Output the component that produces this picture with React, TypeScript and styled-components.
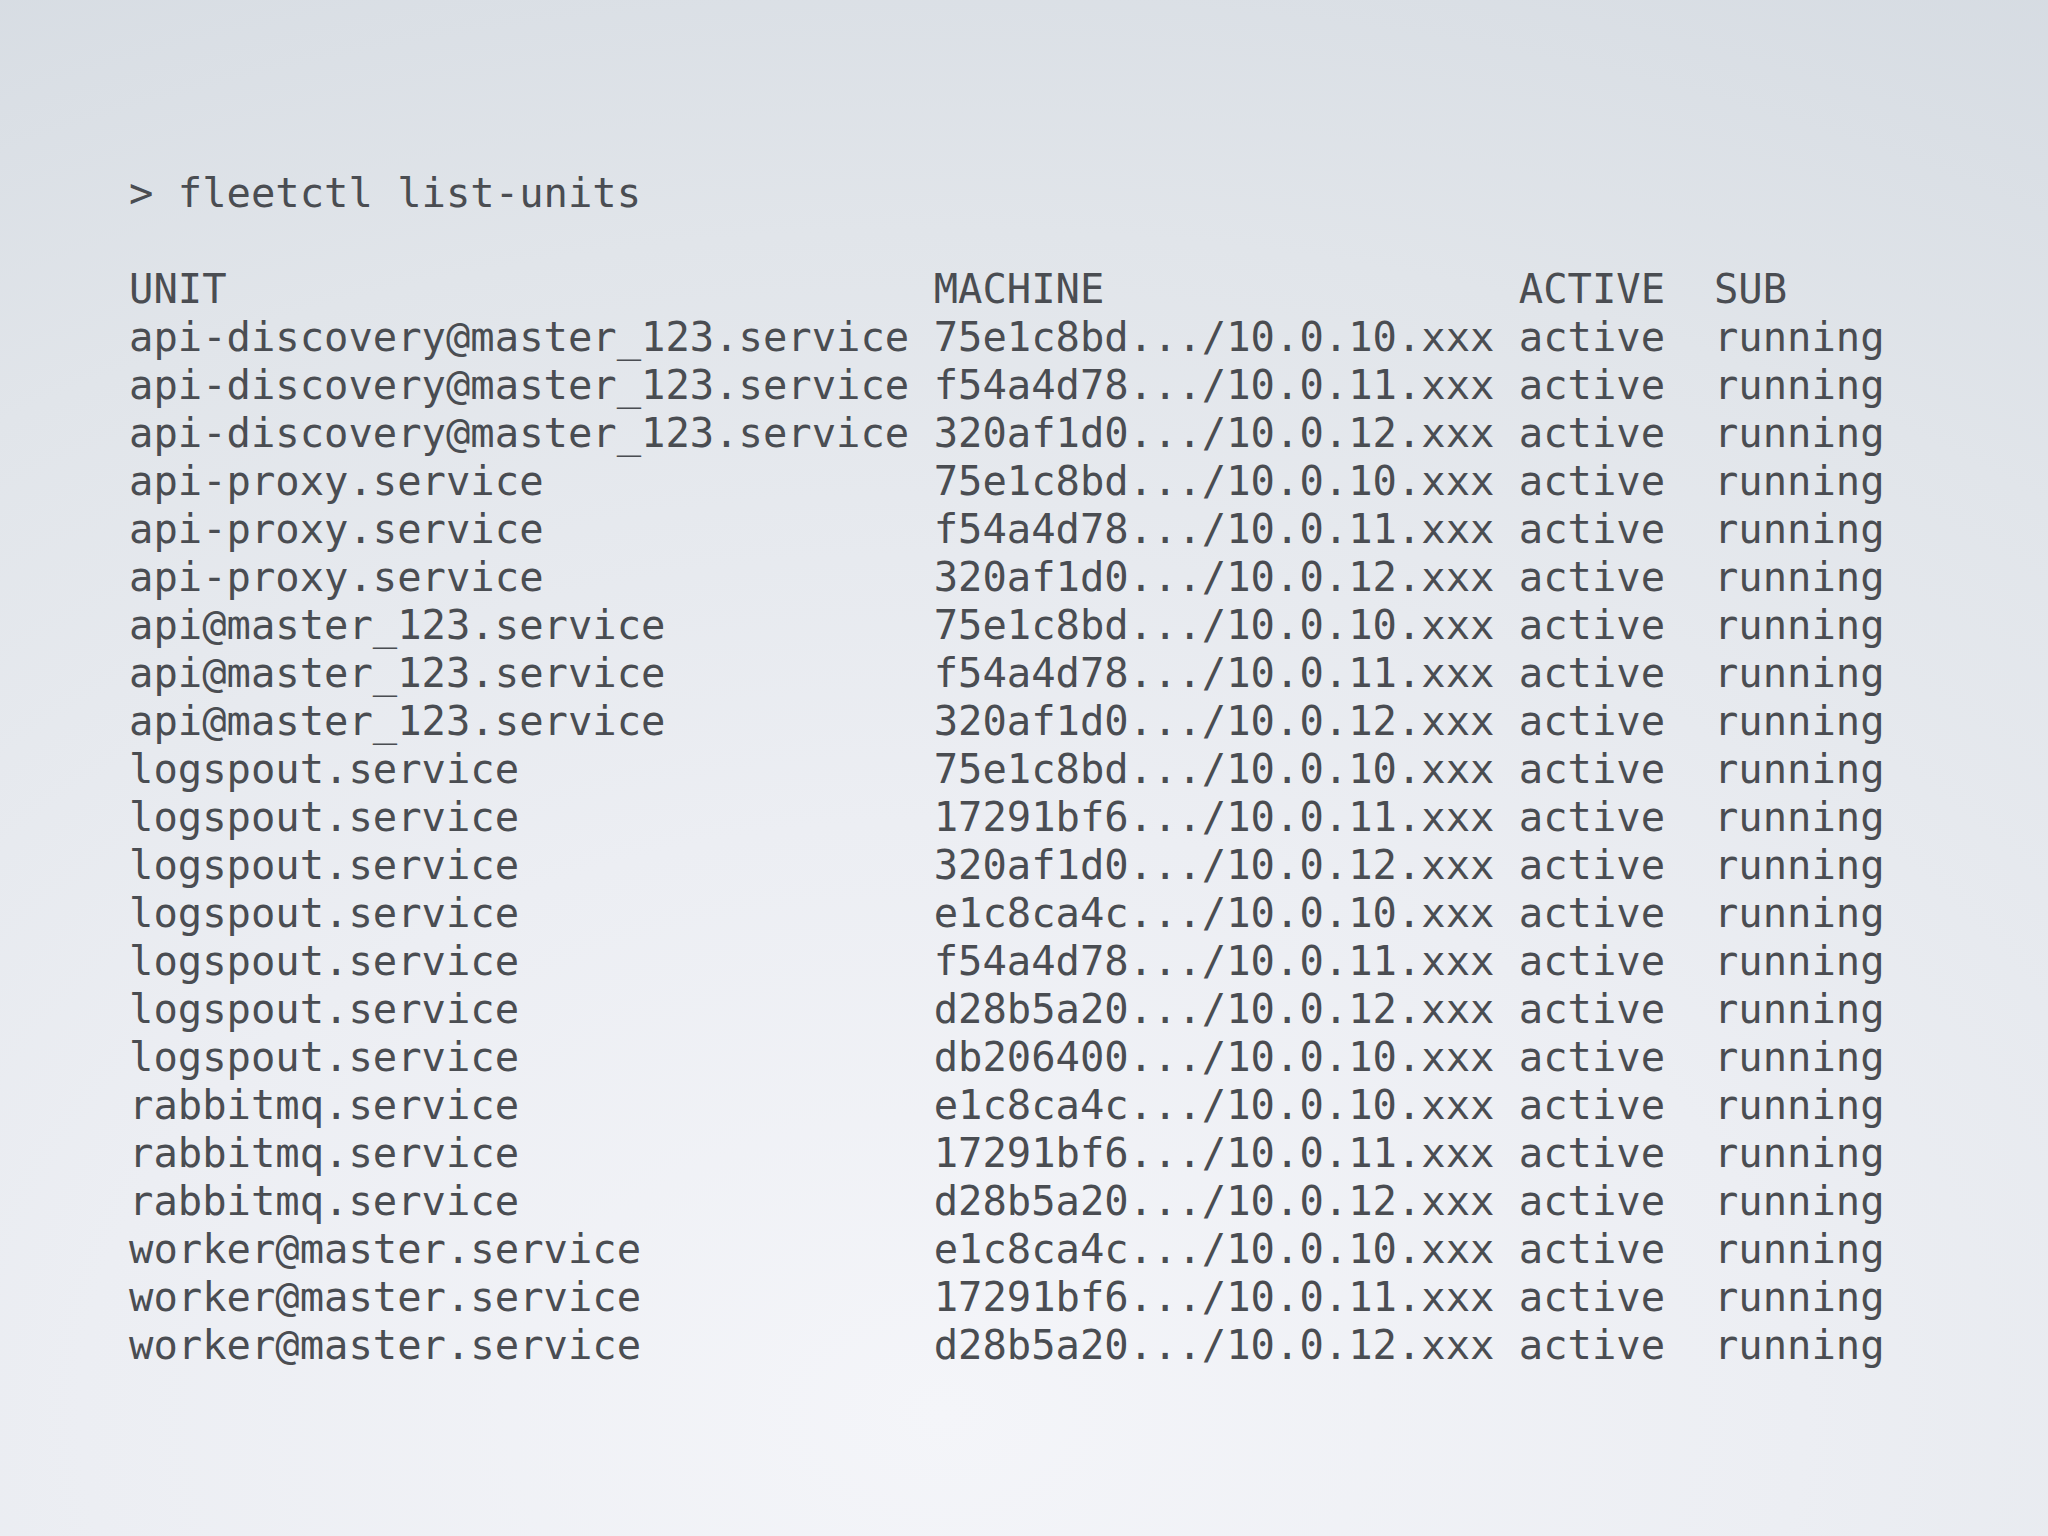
import React from "react";
import styled, { createGlobalStyle } from "styled-components";

const Global = createGlobalStyle`
  html, body { margin: 0; padding: 0; }
  body {
    width: 2048px;
    height: 1536px;
    overflow: hidden;
  }
`;

const Page = styled.div`
  width: 2048px;
  height: 1536px;
  box-sizing: border-box;
  padding: 169px 0 0 129px;
  background: radial-gradient(ellipse 120% 110% at 46% 92%, #f4f5f9 0%, #eceef3 35%, #e1e5ea 70%, #d4dae1 100%);
  font-family: "DejaVu Sans Mono", "Liberation Mono", monospace;
  font-size: 40.5px;
  line-height: 48px;
  color: #4a4d52;
`;

const Command = styled.div`
  white-space: pre;
  margin-bottom: 48px;
`;

const Table = styled.div`
  display: grid;
  grid-template-columns: 33ch 24ch 8ch auto;
  white-space: pre;
`;

const Cell = styled.div`
  white-space: pre;
`;

const rows: [string, string][] = [
  ["api-discovery@master_123.service", "75e1c8bd.../10.0.10.xxx"],
  ["api-discovery@master_123.service", "f54a4d78.../10.0.11.xxx"],
  ["api-discovery@master_123.service", "320af1d0.../10.0.12.xxx"],
  ["api-proxy.service", "75e1c8bd.../10.0.10.xxx"],
  ["api-proxy.service", "f54a4d78.../10.0.11.xxx"],
  ["api-proxy.service", "320af1d0.../10.0.12.xxx"],
  ["api@master_123.service", "75e1c8bd.../10.0.10.xxx"],
  ["api@master_123.service", "f54a4d78.../10.0.11.xxx"],
  ["api@master_123.service", "320af1d0.../10.0.12.xxx"],
  ["logspout.service", "75e1c8bd.../10.0.10.xxx"],
  ["logspout.service", "17291bf6.../10.0.11.xxx"],
  ["logspout.service", "320af1d0.../10.0.12.xxx"],
  ["logspout.service", "e1c8ca4c.../10.0.10.xxx"],
  ["logspout.service", "f54a4d78.../10.0.11.xxx"],
  ["logspout.service", "d28b5a20.../10.0.12.xxx"],
  ["logspout.service", "db206400.../10.0.10.xxx"],
  ["rabbitmq.service", "e1c8ca4c.../10.0.10.xxx"],
  ["rabbitmq.service", "17291bf6.../10.0.11.xxx"],
  ["rabbitmq.service", "d28b5a20.../10.0.12.xxx"],
  ["worker@master.service", "e1c8ca4c.../10.0.10.xxx"],
  ["worker@master.service", "17291bf6.../10.0.11.xxx"],
  ["worker@master.service", "d28b5a20.../10.0.12.xxx"],
];

export default function App() {
  return (
    <>
      <Global />
      <Page>
        <Command>&gt; fleetctl list-units</Command>
        <Table>
          <Cell>UNIT</Cell>
          <Cell>MACHINE</Cell>
          <Cell>ACTIVE</Cell>
          <Cell>SUB</Cell>
          {rows.map(([unit, machine], i) => (
            <React.Fragment key={i}>
              <Cell>{unit}</Cell>
              <Cell>{machine}</Cell>
              <Cell>active</Cell>
              <Cell>running</Cell>
            </React.Fragment>
          ))}
        </Table>
      </Page>
    </>
  );
}
